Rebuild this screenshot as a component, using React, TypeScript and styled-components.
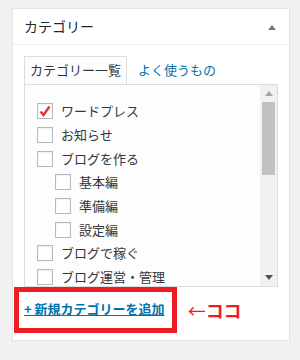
import styled, { createGlobalStyle } from "styled-components";

interface Category {
  name : string;
  checked? : boolean;
  child? : boolean;
}

const categories : Category[] = [
  { name: "ワードプレス", checked: true },
  { name: "お知らせ" },
  { name: "ブログを作る" },
  { name: "基本編", child: true },
  { name: "準備編", child: true },
  { name: "設定編", child: true },
  { name: "ブログで稼ぐ" },
  { name: "ブログ運営・管理" },
];

const GlobalStyle = createGlobalStyle`
  body {
    margin : 0;
    background : #f1f1f1;
    font-family : "Noto Sans CJK JP", "Noto Sans", sans-serif;
    color : #444;
  }
`;

const Triangle = ({ down, color } : { down? : boolean; color : string }) => (
  <svg width="8" height="5" viewBox="0 0 8 5">
    <path d={down ? "M0 0 L8 0 L4 5 Z" : "M0 5 L8 5 L4 0 Z"} fill={color} />
  </svg>
);

const App = () => {
  return (
    <>
      <GlobalStyle />
      <Page>
        <Panel>
          <Header>
            <h2>カテゴリー</h2>
            <Triangle color="#72777c" />
          </Header>
          <Inside>
            <Tabs>
              <Tab active>カテゴリー一覧</Tab>
              <Tab>よく使うもの</Tab>
            </Tabs>
            <ListBox>
              <List>
                {categories.map((c) => (
                  <Row key={c.name} child={c.child}>
                    <CheckBox>
                      {c.checked && (
                        <svg width="14" height="14" viewBox="0 0 14 14">
                          <path d="M2.5 7.5 L5.5 11 L11.5 2.5" fill="none" stroke="#e0393e" strokeWidth="2.6" />
                        </svg>
                      )}
                    </CheckBox>
                    <span>{c.name}</span>
                  </Row>
                ))}
              </List>
              <ScrollBar>
                <div className="arrow">
                  <Triangle color="#a3a3a3" />
                </div>
                <div className="track">
                  <div className="thumb" />
                </div>
                <div className="arrow">
                  <Triangle down color="#505050" />
                </div>
              </ScrollBar>
            </ListBox>
            <Annotation>
              <RedBox>
                <a href="#">+ 新規カテゴリーを追加</a>
              </RedBox>
              <Note>
                <span className="arrow">←</span>ココ
              </Note>
            </Annotation>
          </Inside>
        </Panel>
      </Page>
    </>
  );
};

const Page = styled.div`
  padding : 8px 10px 0 12px;
`;

const Panel = styled.div`
  width : 276px;
  background : #fff;
  border : 1px solid #e5e5e5;
  box-shadow : 0 1px 1px rgba(0,0,0,0.04);
`;

const Header = styled.div`
  display : flex;
  align-items : center;
  justify-content : space-between;
  padding : 8px 13px 8px 11px;
  border-bottom : 1px solid #eee;

  h2 {
    margin : 0;
    font-size : 14px;
    line-height : 19px;
    font-weight : 400;
    color : #23282d;
  }

  svg {
    margin-top : 1px;
  }
`;

const Inside = styled.div`
  margin-top : 11px;
  padding : 0 11px 7px;
`;

const Tabs = styled.div`
  display : flex;
  align-items : flex-end;
`;

const Tab = styled.div<{ active? : boolean }>`
  font-size : 13px;
  line-height : 19px;
  padding : 3px 5px 5px;
  margin-left : ${({ active }) => (active ? "0" : "5px")};
  color : ${({ active }) => (active ? "#32373c" : "#0073aa")};
  background : ${({ active }) => (active ? "#fdfdfd" : "transparent")};
  border : 1px solid ${({ active }) => (active ? "#ddd" : "transparent")};
  border-bottom : none;
`;

const ListBox = styled.div`
  display : flex;
  height : 201px;
  border : 1px solid #ddd;
  background : #fdfdfd;
`;

const List = styled.ul`
  flex : 1;
  margin : 0;
  padding : 14.5px 0 0 12px;
  list-style : none;
  overflow : hidden;
`;

const Row = styled.li<{ child? : boolean }>`
  display : flex;
  align-items : center;
  gap : 8px;
  height : 23.7px;
  padding-left : ${({ child }) => (child ? "18px" : "0")};
  font-size : 13px;
  line-height : 16px;
  color : #32373c;
  white-space : nowrap;
`;

const CheckBox = styled.span`
  display : flex;
  align-items : center;
  justify-content : center;
  width : 16px;
  height : 16px;
  box-sizing : border-box;
  flex-shrink : 0;
  border : 1px solid #b4b9be;
  background : #fff;
  box-shadow : inset 0 1px 2px rgba(0,0,0,0.07);
`;

const ScrollBar = styled.div`
  display : flex;
  flex-direction : column;
  width : 17px;
  background : #f1f1f1;

  .arrow {
    height : 17px;
    display : flex;
    align-items : center;
    justify-content : center;
  }

  .track {
    flex : 1;
    padding : 0 2px;
  }

  .thumb {
    height : 73px;
    background : #c1c1c1;
  }
`;

const Annotation = styled.div`
  display : flex;
  align-items : center;
  margin-left : -10px;
`;

const RedBox = styled.div`
  border : 5px solid #ee1c25;
  padding : 7px 7px 10px 5px;

  a {
    display : block;
    font-size : 13px;
    line-height : 19px;
    font-weight : 700;
    color : #0073aa;
    text-decoration : underline;
    white-space : nowrap;
  }
`;

const Note = styled.span`
  margin-left : 11px;
  font-size : 18px;
  font-weight : 700;
  color : #ee1c25;

  .arrow {
    font-weight : 400;
  }
`;

export default App;
